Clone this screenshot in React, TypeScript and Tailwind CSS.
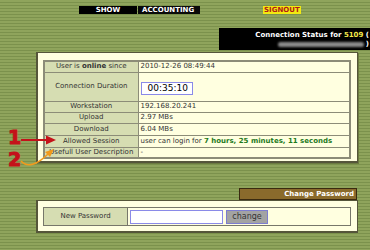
import React from 'react';

type Row = {
  label: React.ReactNode;
  value: React.ReactNode;
  h: string;
};

const rows: Row[] = [
  {
    label: (
      <>
        User is <b>online</b> since
      </>
    ),
    value: '2010-12-26 08:49:44',
    h: 'h-[11px]',
  },
  {
    label: 'Connection Duration',
    value: (
      <div className="flex h-full items-start pt-[3px]">
        <div className="flex h-[13px] w-[52px] items-center border border-[#8a8ae8] bg-white pl-[6px] text-[9px] leading-none text-black">
          00:35:10
        </div>
      </div>
    ),
    h: 'h-[29px]',
  },
  { label: 'Workstation', value: '192.168.20.241', h: 'h-[11px]' },
  { label: 'Upload', value: '2.97 MBs', h: 'h-[11px]' },
  { label: 'Download', value: '6.04 MBs', h: 'h-[12px]' },
  {
    label: 'Allowed Session',
    value: (
      <>
        user can login for <b className="text-[#1d7a1d]">7 hours, 25 minutes, 11 seconds</b>
      </>
    ),
    h: 'h-[12px]',
  },
  { label: 'Usefull User Description', value: '-', h: 'h-[11px]' },
];

export default function App() {
  return (
    <div className="relative h-[250px] w-[370px] overflow-hidden bg-[repeating-linear-gradient(to_bottom,#8fa45c_0px,#8fa45c_2px,#7b914c_2px,#7b914c_3px)] font-['DejaVu_Sans',Verdana,sans-serif] text-[7px] text-[#333]">
      {/* top menu */}
      <div className="flex h-[8px] items-stretch pt-0 mt-[6px] pl-[79px] text-[7px] font-bold leading-[8px] text-white">
        <div className="w-[58px] bg-black text-center">SHOW</div>
        <div className="ml-[1px] w-[62px] bg-[#0a0a0a] pl-[4px]">ACCOUNTING</div>
        <div className="ml-[63px] bg-[#f2ea12] px-[1px] text-[#b01818]">SIGNOUT</div>
      </div>

      {/* connection status */}
      <div className="ml-[219px] mt-[14px] h-[22px] bg-black pr-[1px] pt-[3px] text-right text-[7px] font-bold leading-[9px] text-white">
        <div>
          Connection Status for <span className="text-[#f2e84a]">5109</span> (
        </div>
        <div className="flex items-center justify-end">
          <span className="mr-[2px] h-[5px] w-[86px] rounded-full bg-[#8a8a8a] blur-[1px]" />
          )
        </div>
      </div>

      {/* status panel */}
      <div className="ml-[36px] mt-[2px] h-[111px] w-[322px] border border-[#55553a] border-l-2 border-b-2 bg-[#ffffe0] pl-[5px] pt-[7px] shadow-[1px_1px_0_#6b7a40]">
        <table className="w-[308px] border-collapse border-2 border-[#8c8c78]">
          <tbody>
            {rows.map((r, i) => (
              <tr key={i} className={r.h}>
                <td className="w-[94px] border border-[#8c8c78] bg-[#d6ddb2] p-0 text-center align-middle leading-none text-[#333]">
                  {r.label}
                </td>
                <td className="border border-[#8c8c78] p-0 pl-[2px] align-middle leading-none text-[#333]">
                  {r.value}
                </td>
              </tr>
            ))}
          </tbody>
        </table>
      </div>

      {/* change password header */}
      <div className="ml-[239px] mt-[25px] h-[12px] w-[118px] border border-[#3a2a10] bg-[#8a6a2c] pr-[2px] text-right text-[7px] font-bold leading-[11px] text-white">
        Change Password
      </div>

      {/* password panel */}
      <div className="ml-[36px] h-[33px] w-[322px] border border-[#55553a] border-l-2 border-b-2 bg-[#ffffe0] pl-[5px] pt-[6px]">
        <div className="flex h-[19px] w-[308px] items-center border border-[#77776a]">
          <div className="flex h-full w-[84px] items-center justify-center border-r border-[#77776a] bg-[#d6ddb2] text-[#333]">
            New Password
          </div>
          <div className="ml-[2px] h-[14px] w-[93px] border border-[#8a8ae8] bg-white" />
          <button className="ml-[3px] h-[14px] w-[42px] border border-[#7c7cd0] bg-[#a3a3a3] text-[8px] leading-none text-[#333]">
            change
          </button>
        </div>
      </div>

      {/* annotations */}
      <svg className="absolute left-0 top-[124px]" width="60" height="46" viewBox="0 0 60 46">
        <text x="8" y="20" fill="#c4121a" stroke="#c4121a" strokeWidth="1" fontSize="19" fontWeight="bold" fontFamily="DejaVu Sans, sans-serif">1</text>
        <line x1="21" y1="16" x2="48" y2="16" stroke="#c4121a" strokeWidth="2" />
        <path d="M46 11.5 L56 16 L46 20.5 Z" fill="#c4121a" />
        <text x="8" y="42" fill="#c4121a" stroke="#c4121a" strokeWidth="1" fontSize="19" fontWeight="bold" fontFamily="DejaVu Sans, sans-serif">2</text>
        <path d="M21 37 C27 44 37 41 48 30" stroke="#f29a1c" strokeWidth="1.6" fill="none" />
        <path d="M45 28 L54 25 L50 33 Z" fill="#f29a1c" />
      </svg>
    </div>
  );
}
